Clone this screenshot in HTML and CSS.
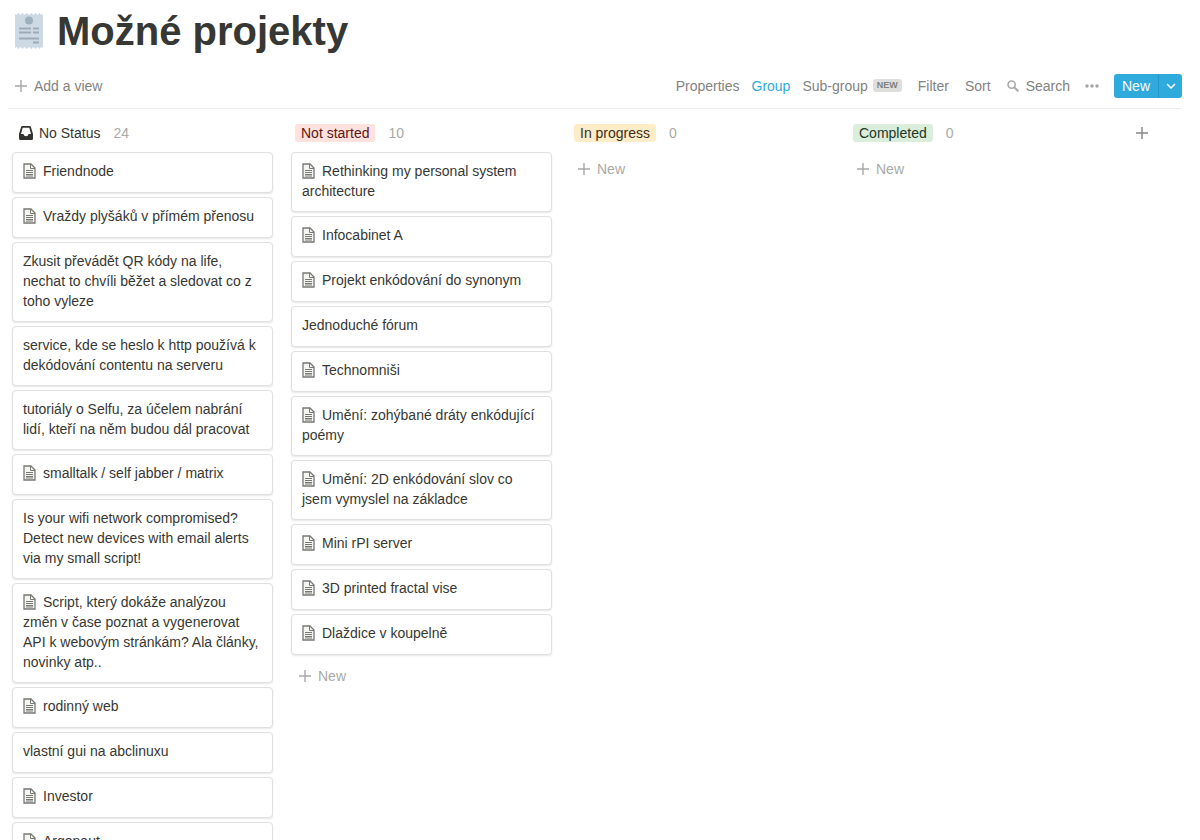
FILE: index.html
```
<!DOCTYPE html>
<html lang="cs">
<head>
<meta charset="utf-8">
<meta name="viewport" content="width=device-width, initial-scale=1">
<title>Možné projekty</title>
<link rel="stylesheet" href="styles.css">
</head>
<body>
<svg class="sprite" aria-hidden="true">
  <symbol id="page" viewBox="0 0 13 16">
    <path d="M1 1H8L12 5V15H1Z" fill="#f4f4f3" stroke="#777774" stroke-width="1.3"/>
    <path d="M7.500 1V5.500H12M3 7.500H10M3 9.500H10M3 11.500H10M3 13H10" fill="none" stroke="#777774" stroke-width="1"/>
  </symbol>
  <symbol id="plus" viewBox="0 0 12 12">
    <path d="M6 0V12M0 6H12" fill="none" stroke="currentColor" stroke-width="1.4"/>
  </symbol>
</svg>
<header class="page-header">
  <svg class="page-icon" viewBox="0 0 28 36" aria-hidden="true">
    <path d="M0 1l1.500 1L3.500 0l2 2 2-2 2 2 2-2 2.500 2 2.500-2 2 2 2-2 2 2 2-2 2 2L28 1V35l-1.500-1-2 2-2-2-2 2-2-2-2 2-2.500-2-2.500 2-2-2-2 2-2-2-2 2-2-2L0 35Z" fill="#cddae3"/>
    <circle cx="14" cy="7.500" r="4" fill="#9fb0bd"/>
    <path d="M4 15.500H16M18 15.500H24M4 19.500H16M18 19.500H24M4 25.500H24M18 29.500H24" stroke="#9bacb8" stroke-width="1.800"/>
  </svg>
  <h1 class="title">Možné projekty</h1>
</header>
<nav class="toolbar" aria-label="View options">
  <button class="tool add-view"><svg class="plus"><use href="#plus"/></svg>Add a view</button>
  <div class="tools">
    <button class="tool">Properties</button>
    <button class="tool active">Group</button>
    <button class="tool">Sub-group<span class="new-tag">NEW</span></button>
    <button class="tool filter">Filter</button>
    <button class="tool sort">Sort</button>
    <button class="tool"><svg class="search-icon" viewBox="0 0 12 12" aria-hidden="true"><circle cx="4.600" cy="4.600" r="3.600" fill="none" stroke="#aaaaa8" stroke-width="1.600"/><path d="M7.300 7.300L11.300 11.300" stroke="#aaaaa8" stroke-width="2"/></svg>Search</button>
    <button class="tool more" aria-label="More"><svg class="dots" viewBox="0 0 14 4"><g fill="#a5a5a2"><circle cx="2" cy="2" r="1.700"/><circle cx="7" cy="2" r="1.700"/><circle cx="12" cy="2" r="1.700"/></g></svg></button>
    <div class="new-group">
      <button class="new-main">New</button>
      <button class="new-menu" aria-label="New options"><svg class="chevron" viewBox="0 0 10 6"><path d="M1 1L5 5L9 1" fill="none" stroke="#fff" stroke-width="1.500"/></svg></button>
    </div>
  </div>
</nav>
<main class="board">
  <section class="column">
    <h2 class="column-head no-status"><svg class="inbox" viewBox="0 0 14 14" aria-hidden="true"><path fill-rule="evenodd" d="M3.400 0H10.600Q11.600 0 11.900 1L14 8V12.500Q14 14 12.500 14H1.500Q0 14 0 12.500V8L2.100 1Q2.400 0 3.400 0ZM3.700 1.700L2 8H4.500Q4.800 10.300 7 10.300T9.500 8H12L10.300 1.700Z" fill="#32322e"/></svg>No Status<span class="count">24</span></h2>
    <article class="card"><svg class="page"><use href="#page"/></svg>Friendnode</article>
    <article class="card"><svg class="page"><use href="#page"/></svg>Vraždy plyšáků v přímém přenosu</article>
    <article class="card">Zkusit převádět QR kódy na life, nechat to chvíli běžet a sledovat co z toho vyleze</article>
    <article class="card">service, kde se heslo k http používá k dekódování contentu na serveru</article>
    <article class="card">tutoriály o Selfu, za účelem nabrání lidí, kteří na něm budou dál pracovat</article>
    <article class="card"><svg class="page"><use href="#page"/></svg>smalltalk / self jabber / matrix</article>
    <article class="card">Is your wifi network compromised? Detect new devices with email alerts via my small script!</article>
    <article class="card"><svg class="page"><use href="#page"/></svg>Script, který dokáže analýzou změn v čase poznat a vygenerovat API k webovým stránkám? Ala články, novinky atp..</article>
    <article class="card"><svg class="page"><use href="#page"/></svg>rodinný web</article>
    <article class="card">vlastní gui na abclinuxu</article>
    <article class="card"><svg class="page"><use href="#page"/></svg>Investor</article>
    <article class="card"><svg class="page"><use href="#page"/></svg>Argonaut</article>
  </section>
  <section class="column">
    <h2 class="column-head"><span class="status red">Not started</span><span class="count">10</span></h2>
    <article class="card"><svg class="page"><use href="#page"/></svg>Rethinking my personal system architecture</article>
    <article class="card"><svg class="page"><use href="#page"/></svg>Infocabinet A</article>
    <article class="card"><svg class="page"><use href="#page"/></svg>Projekt enkódování do synonym</article>
    <article class="card">Jednoduché fórum</article>
    <article class="card"><svg class="page"><use href="#page"/></svg>Technomniši</article>
    <article class="card"><svg class="page"><use href="#page"/></svg>Umění: zohýbané dráty enkódující poémy</article>
    <article class="card"><svg class="page"><use href="#page"/></svg>Umění: 2D enkódování slov co jsem vymyslel na základce</article>
    <article class="card"><svg class="page"><use href="#page"/></svg>Mini rPI server</article>
    <article class="card"><svg class="page"><use href="#page"/></svg>3D printed fractal vise</article>
    <article class="card"><svg class="page"><use href="#page"/></svg>Dlaždice v koupelně</article>
    <button class="add-card"><svg class="plus"><use href="#plus"/></svg>New</button>
  </section>
  <section class="column">
    <h2 class="column-head"><span class="status yellow">In progress</span><span class="count">0</span></h2>
    <button class="add-card"><svg class="plus"><use href="#plus"/></svg>New</button>
  </section>
  <section class="column">
    <h2 class="column-head"><span class="status green">Completed</span><span class="count">0</span></h2>
    <button class="add-card"><svg class="plus"><use href="#plus"/></svg>New</button>
  </section>
  <button class="add-column" aria-label="Add a group"><svg class="plus"><use href="#plus"/></svg></button>
</main>
</body>
</html>
```

FILE: styles.css
```
* { box-sizing: border-box; }
body {
  margin: 0;
  height: 100vh;
  display: flex;
  flex-direction: column;
  overflow: hidden;
  background: #fff;
  color: #373733;
  font: 14px/20px "Liberation Sans", Arial, sans-serif;
}
button {
  margin: 0;
  padding: 0;
  border: 0;
  background: none;
  color: inherit;
  font: inherit;
  white-space: nowrap;
  cursor: pointer;
}
.sprite { display: none; }
.page-header {
  display: flex;
  align-items: center;
  gap: 14px;
  padding: 7px 15px 0;
}
.page-icon { width: 28px; height: 36px; }
.title {
  margin: 0;
  font-size: 40px;
  line-height: 48px;
  font-weight: bold;
}
.toolbar {
  display: flex;
  align-items: center;
  justify-content: space-between;
  flex-shrink: 0;
  height: 46px;
  margin: 8px 18px 0 8px;
  padding-left: 7px;
  border-bottom: 1px solid #ededec;
  color: #82827f;
}
.tools, .tool { display: flex; align-items: center; }
.tools { gap: 12px; }
.active { color: #2eaadc; }
.plus { width: 12px; height: 12px; flex-shrink: 0; color: #a8a8a5; }
.add-view { gap: 7px; }
.new-tag {
  margin-left: 5px;
  padding: 0 4px;
  border-radius: 3px;
  background: #dededc;
  font-size: 9px;
  line-height: 13px;
  font-weight: bold;
}
.filter { margin-left: 4px; }
.sort { margin: 0 4px; }
.search-icon { width: 12px; height: 12px; margin-right: 7px; }
.more { margin: 0 3px; }
.dots { width: 14px; height: 4px; }
.new-group {
  display: flex;
  height: 24px;
  border-radius: 3px;
  overflow: hidden;
  background: #2eaadc;
  color: #fff;
}
.new-main { padding: 0 8px; }
.new-menu {
  display: flex;
  align-items: center;
  justify-content: center;
  width: 24px;
  border-left: 1px solid #2698c8;
}
.chevron { width: 10px; height: 6px; }
.board { display: flex; gap: 18px; padding: 0 12px; }
.column {
  display: flex;
  flex-direction: column;
  gap: 4px;
  flex: 0 0 261px;
}
.column-head {
  display: flex;
  align-items: center;
  height: 39px;
  margin: 0;
  padding: 9px 4px 0;
  font-size: 14px;
  font-weight: normal;
}
.no-status { padding-left: 7px; }
.inbox { width: 14px; height: 14px; margin-right: 6px; }
.count { margin-left: 13px; color: #a9a9a6; }
.status { padding: 0 6px; border-radius: 3px; line-height: 18px; }
.red { background: #ffe2dd; color: #5d1715; }
.yellow { background: #fdecc8; color: #402c1b; }
.green { background: #dbeddb; color: #1c3829; }
.card {
  flex-shrink: 0;
  min-height: 41px;
  padding: 8px 10px 10px;
  border: 1px solid #e0e0df;
  border-radius: 4px;
  background: #fff;
  box-shadow: 0 1px 2px #0000001a;
}
.page {
  width: 13px;
  height: 16px;
  margin-right: 7px;
  vertical-align: -3px;
}
.add-card {
  display: flex;
  align-items: center;
  align-self: flex-start;
  gap: 7px;
  height: 33px;
  padding: 0 8px;
  color: #a9a9a6;
}
.add-column {
  height: 30px;
  margin: 9px 0 0 8px;
  display: flex;
  align-items: center;
}
.add-column .plus { color: #858582; }
```
